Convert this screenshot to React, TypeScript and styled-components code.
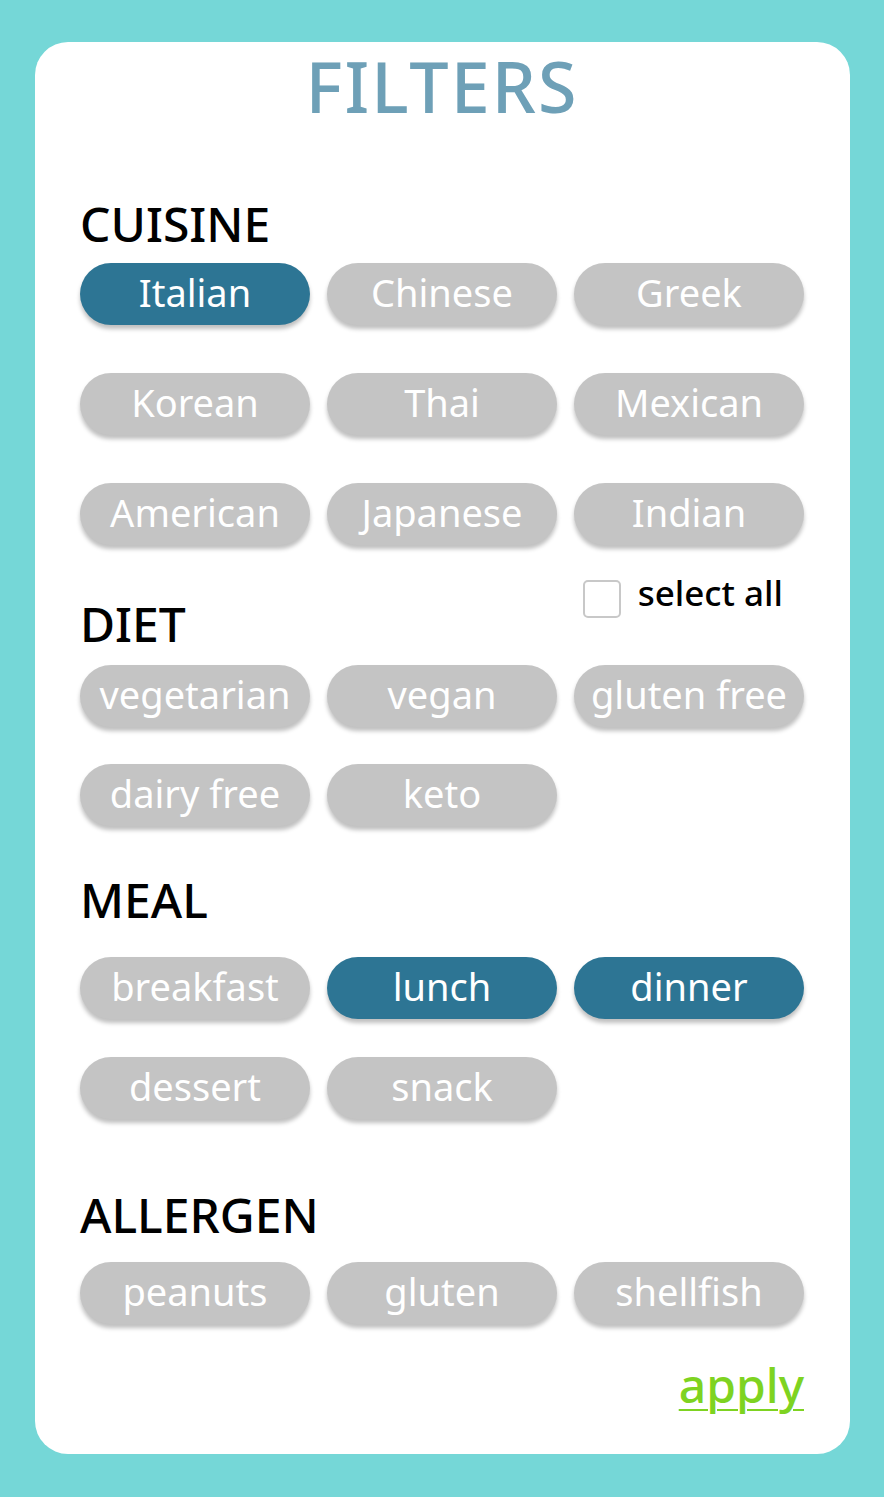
import React from "react";
import styled, { createGlobalStyle } from "styled-components";

const GlobalStyle = createGlobalStyle`
  html, body { margin: 0; padding: 0; }
  body { background: #75d7d7; font-family: "Noto Sans", "Open Sans", sans-serif; }
`;

const Page = styled.div`
  min-height: 100vh;
  box-sizing: border-box;
  padding: 42px 34px 44px 35px;
  background: #75d7d7;
`;

const Card = styled.div`
  background: #ffffff;
  border-radius: 33px;
  padding: 9px 46px 45px 45px;
  display: flex;
  flex-direction: column;
`;

const Title = styled.h1`
  margin: 0;
  text-align: center;
  font-size: 70px;
  line-height: 70px;
  font-weight: 500;
  color: #6ea0b7;
  letter-spacing: 2px;
`;

const HeaderRow = styled.div<{ $top: number }>`
  display: flex;
  justify-content: space-between;
  align-items: flex-start;
  margin-top: ${(p) => p.$top}px;
`;

const Label = styled.h2<{ $offset?: number }>`
  margin: ${(p) => p.$offset ?? 0}px 0 0 0;
  font-size: 48px;
  line-height: 48px;
  font-weight: 500;
  color: #000;
`;

const SelectAll = styled.label`
  display: flex;
  align-items: flex-start;
  gap: 17px;
  margin-right: 21px;
  font-size: 35px;
  line-height: 25px;
  font-weight: 500;
  color: #000;
`;

const Box = styled.span`
  width: 38px;
  height: 38px;
  box-sizing: border-box;
  border: 2px solid #c8c8c8;
  border-radius: 5px;
  background: #fff;
`;

const Grid = styled.div<{ $top: number; $rowGap: number }>`
  display: grid;
  grid-template-columns: repeat(3, 230px);
  column-gap: 17px;
  row-gap: ${(p) => p.$rowGap}px;
  margin-top: ${(p) => p.$top}px;
`;

const Pill = styled.button<{ $active?: boolean }>`
  height: 62px;
  box-sizing: border-box;
  padding: 0 0 5px 0;
  border: none;
  border-radius: 31px;
  background: ${(p) => (p.$active ? "#2d7594" : "#c4c4c4")};
  box-shadow: 0 4px 4px rgba(0, 0, 0, 0.25);
  color: #fff;
  font-family: "Noto Sans", "Open Sans", sans-serif;
  font-size: 38px;
  font-weight: 400;
  display: flex;
  align-items: center;
  justify-content: center;
  white-space: nowrap;
  cursor: pointer;
`;

const Footer = styled.div`
  display: flex;
  justify-content: flex-end;
  margin-top: 37px;
`;

const Apply = styled.a`
  font-size: 48px;
  line-height: 48px;
  font-weight: 500;
  color: #7ed321;
  text-decoration: underline;
  text-decoration-thickness: 2px;
  text-underline-offset: 6px;
  cursor: pointer;
`;

type Item = { name: string; active?: boolean };

const PillGrid = ({ items, top, rowGap }: { items: Item[]; top: number; rowGap: number }) => (
  <Grid $top={top} $rowGap={rowGap}>
    {items.map((it) => (
      <Pill key={it.name} $active={it.active}>
        {it.name}
      </Pill>
    ))}
  </Grid>
);

export default function App() {
  return (
    <>
      <GlobalStyle />
      <Page>
        <Card>
          <Title>FILTERS</Title>
          <HeaderRow $top={79}>
            <Label>CUISINE</Label>
          </HeaderRow>
          <PillGrid
            top={15}
            rowGap={48}
            items={[
              { name: "Italian", active: true },
              { name: "Chinese" },
              { name: "Greek" },
              { name: "Korean" },
              { name: "Thai" },
              { name: "Mexican" },
              { name: "American" },
              { name: "Japanese" },
              { name: "Indian" },
            ]}
          />
          <HeaderRow $top={35}>
            <Label $offset={20}>DIET</Label>
            <SelectAll>
              <Box />
              select all
            </SelectAll>
          </HeaderRow>
          <PillGrid
            top={17}
            rowGap={37}
            items={[
              { name: "vegetarian" },
              { name: "vegan" },
              { name: "gluten free" },
              { name: "dairy free" },
              { name: "keto" },
            ]}
          />
          <HeaderRow $top={50}>
            <Label>MEAL</Label>
          </HeaderRow>
          <PillGrid
            top={33}
            rowGap={38}
            items={[
              { name: "breakfast" },
              { name: "lunch", active: true },
              { name: "dinner", active: true },
              { name: "dessert" },
              { name: "snack" },
            ]}
          />
          <HeaderRow $top={72}>
            <Label>ALLERGEN</Label>
          </HeaderRow>
          <PillGrid
            top={23}
            rowGap={38}
            items={[{ name: "peanuts" }, { name: "gluten" }, { name: "shellfish" }]}
          />
          <Footer>
            <Apply>apply</Apply>
          </Footer>
        </Card>
      </Page>
    </>
  );
}
